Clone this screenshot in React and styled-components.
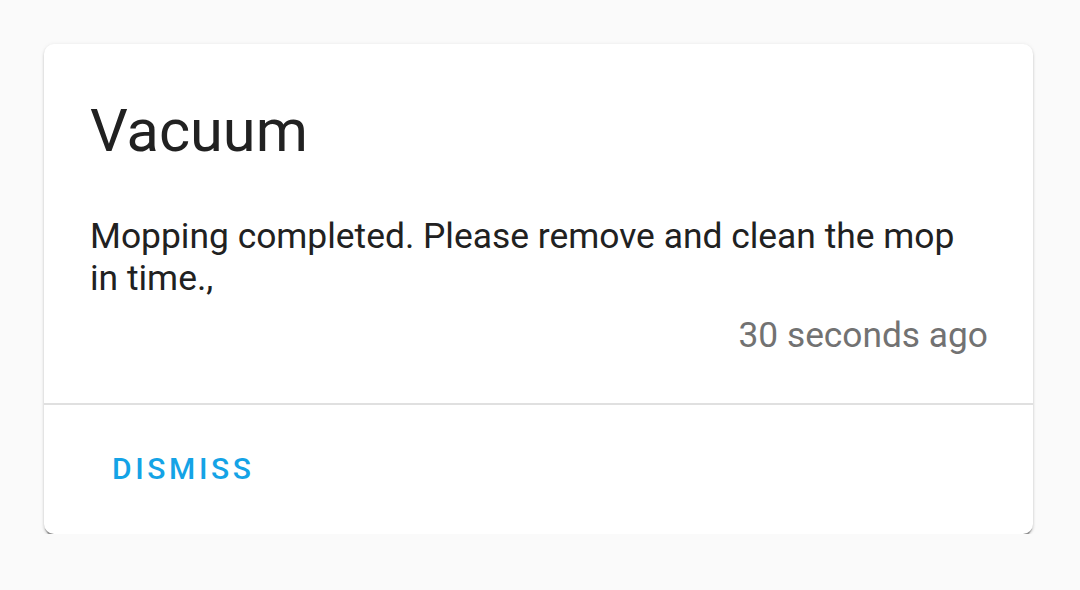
import styled, { createGlobalStyle } from 'styled-components';

const GlobalStyle = createGlobalStyle`
  html, body {
    margin: 0;
    padding: 0;
    background: #fafafa;
    font-family: Roboto, "Noto Sans", sans-serif;
  }
`;

function App() {
  return (
    <>
      <GlobalStyle />
      <Page>
        <Card>
          <Header>Vacuum</Header>
          <Content>
            <Message>
              Mopping completed. Please remove and clean the mop in time.,
            </Message>
            <Time>30 seconds ago</Time>
          </Content>
          <Actions>
            <TextButton type="button">Dismiss</TextButton>
          </Actions>
        </Card>
      </Page>
    </>
  );
}

const Page = styled.main`
  padding: 44px 46px 0 44px;
`;

const Card = styled.section`
  width: 989px;
  background: #fff;
  border-radius: 10px;
  box-shadow:
    0 3px 1px -1px rgba(0, 0, 0, 0.35),
    0 2px 3px rgba(0, 0, 0, 0.18),
    0 0 4px rgba(0, 0, 0, 0.06);
  display: flex;
  flex-direction: column;
`;

const Header = styled.h1`
  margin: 0;
  padding: 45px 46px 0;
  font-size: 59.5px;
  line-height: 84px;
  font-weight: 400;
  color: #212121;
`;

const Content = styled.div`
  padding: 42px 45px 48px 46px;
  display: flex;
  flex-direction: column;
`;

const Message = styled.p`
  margin: 0;
  font-size: 35.4px;
  line-height: 42px;
  color: #212121;
`;

const Time = styled.div`
  margin-top: 16px;
  align-self: flex-end;
  font-size: 35.3px;
  line-height: 40px;
  color: #727272;
`;

const Actions = styled.div`
  border-top: 2px solid #e0e0e0;
  padding: 44px 46px 45px;
  display: flex;
`;

const TextButton = styled.button`
  border: none;
  background: none;
  padding: 0 0 0 22px;
  font-family: Roboto, "Noto Sans", sans-serif;
  font-size: 30px;
  line-height: 40px;
  font-weight: 500;
  letter-spacing: 0.12em;
  text-transform: uppercase;
  color: #14a3e6;
  cursor: pointer;
`;

export default App;
